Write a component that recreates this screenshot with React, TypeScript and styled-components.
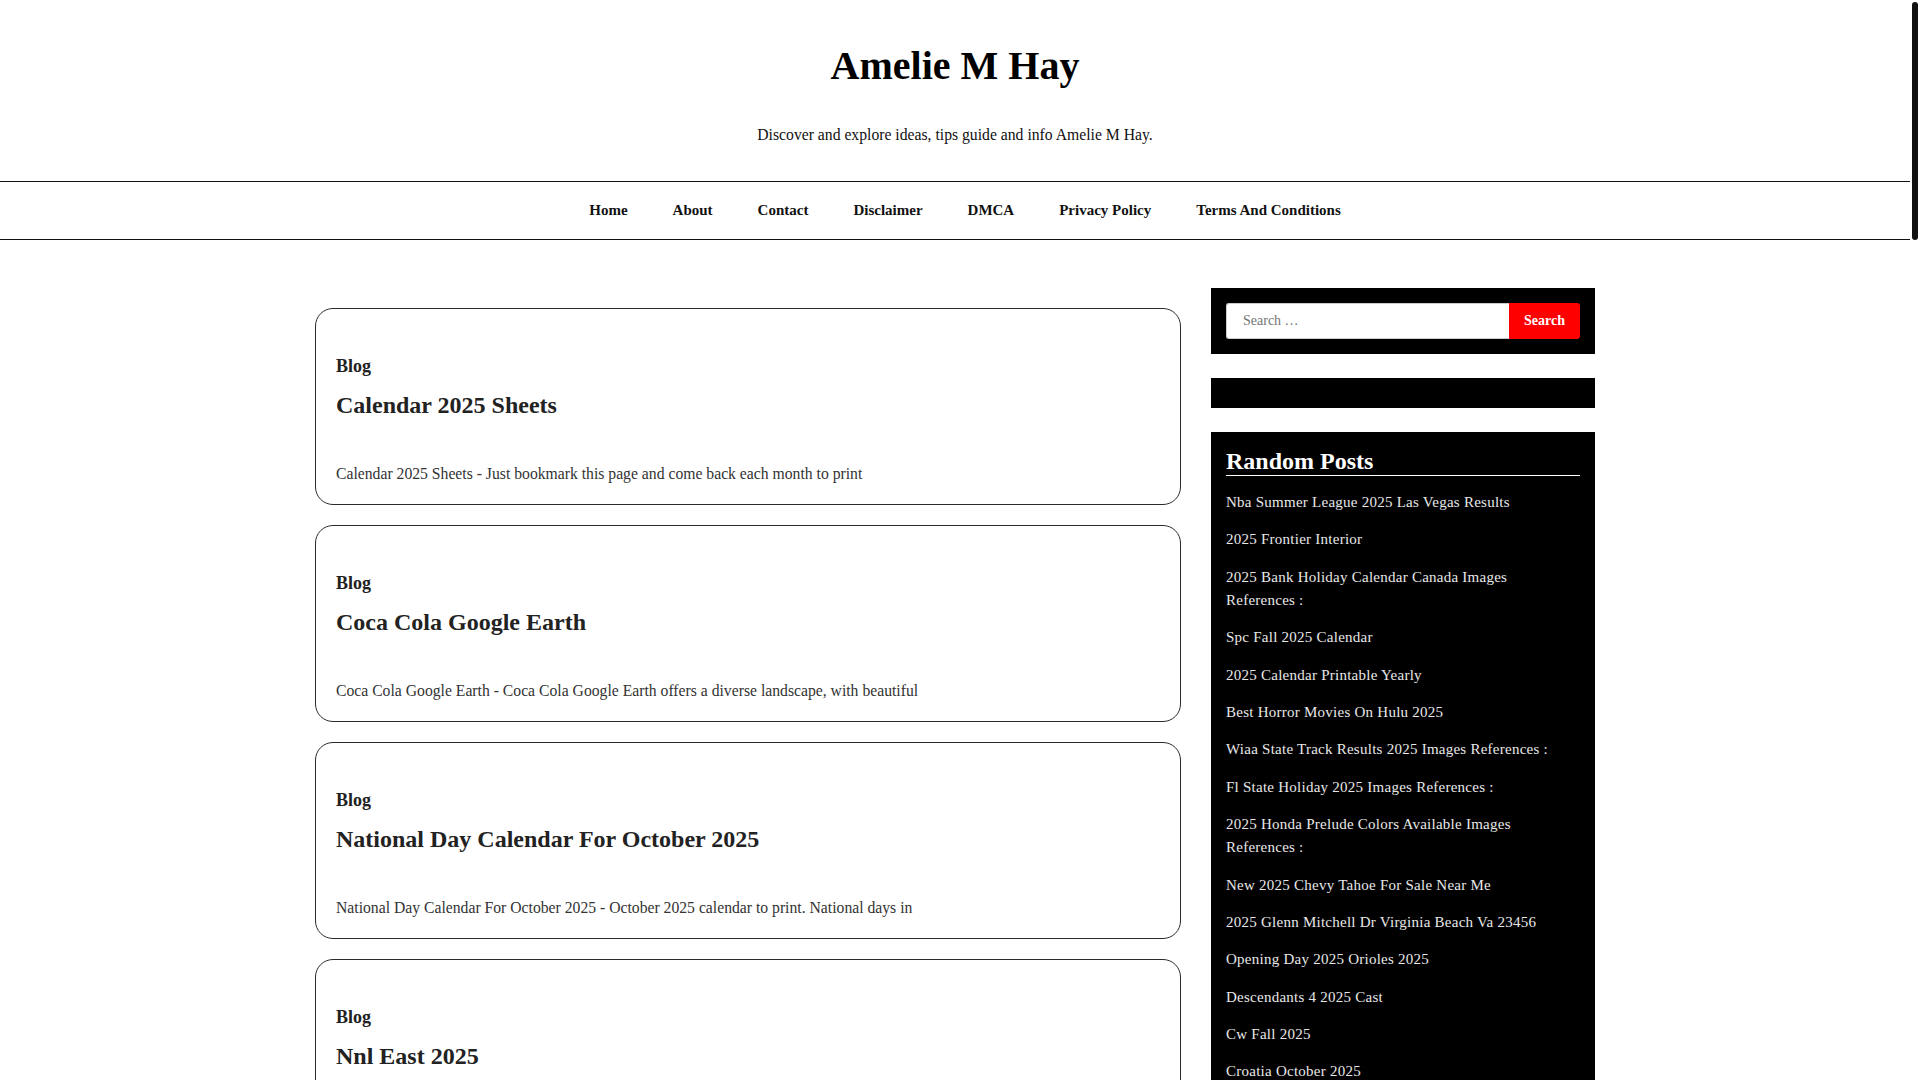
import styled, { createGlobalStyle } from "styled-components";

const GlobalStyle = createGlobalStyle`
  html, body {
    margin: 0;
    padding: 0;
    background: #fff;
  }
  body {
    font-family: "Liberation Serif", "Times New Roman", serif;
    color: #222;
  }
`;

// page width leaves room for the scrollbar strip seen on the right
const Page = styled.div`
  width: calc(100% - 10px);
`;

const ScrollThumb = styled.div`
  position: fixed;
  top: 2px;
  right: 2px;
  width: 6px;
  height: 238px;
  border-radius: 3px;
  background: #111;
`;

const Header = styled.header`
  text-align: center;
  padding: 42px 0 34px;
`;

const SiteTitle = styled.h1`
  margin: 0;
  font-size: 40px;
  line-height: 48px;
  font-weight: 700;
  color: #000;
`;

const Tagline = styled.p`
  margin: 33px 0 0;
  font-size: 15.7px;
  line-height: 24px;
  color: #111;
`;

const Nav = styled.nav`
  border-top: 1px solid #111;
  border-bottom: 1px solid #111;
`;

const NavList = styled.ul`
  list-style: none;
  margin: 0;
  padding: 0 0 0 20px;
  display: flex;
  justify-content: center;
`;

const NavItem = styled.li`
  padding: 0 22.5px;
  font-size: 15px;
  font-weight: 700;
  line-height: 57px;
  color: #111;
`;

const Wrapper = styled.div`
  width: 1280px;
  margin: 48px auto 0;
  display: flex;
  gap: 30px;
  align-items: flex-start;
`;

const Main = styled.main`
  width: 866px;
  flex-shrink: 0;
`;

const Card = styled.article`
  margin-top: 20px;
  border: 1px solid #2a2a2a;
  border-radius: 18px;
  padding: 44px 20px 18px;
`;

const Category = styled.div`
  font-size: 18px;
  line-height: 27px;
  font-weight: 700;
  color: #222;
`;

const PostTitle = styled.h2`
  margin: 10px 0 0;
  font-size: 24px;
  line-height: 31px;
  font-weight: 700;
  color: #222;
`;

const Excerpt = styled.p`
  margin: 41px 0 0;
  font-size: 15.7px;
  line-height: 24px;
  color: #333;
  white-space: nowrap;
  overflow: hidden;
`;

const Sidebar = styled.aside`
  width: 384px;
  display: flex;
  flex-direction: column;
  gap: 24px;
`;

const Widget = styled.section<{ $minHeight?: number }>`
  background: #000;
  padding: 15px;
  min-height: ${(p) => (p.$minHeight ? `${p.$minHeight}px` : "auto")};
  box-sizing: border-box;
`;

const SearchForm = styled.form`
  display: flex;
  height: 36px;
`;

const SearchInput = styled.input`
  flex: 1;
  min-width: 0;
  border: 1px solid #ccc;
  border-right: none;
  border-radius: 3px 0 0 3px;
  padding: 0 16px;
  font-family: inherit;
  font-size: 14px;
  background: #fff;
  outline: none;
  &::placeholder {
    color: #757575;
  }
`;

const SearchButton = styled.button`
  width: 71px;
  border: none;
  border-radius: 0 3px 3px 0;
  background: #ff0000;
  color: #fff;
  font-family: inherit;
  font-size: 14px;
  font-weight: 700;
  cursor: pointer;
`;

const WidgetTitle = styled.h3`
  margin: 0 0 15px;
  font-size: 24px;
  line-height: 28px;
  font-weight: 700;
  color: #fff;
  border-bottom: 1px solid #fff;
`;

const PostList = styled.ul`
  list-style: none;
  margin: 0;
  padding: 0;
`;

const PostLink = styled.li`
  font-size: 15px;
  letter-spacing: 0.25px;
  line-height: 23px;
  color: #e8e8e8;
  margin-bottom: 14.4px;
`;

const Footer = styled.footer`
  margin-top: 60px;
  background: #000;
  color: #ddd;
  text-align: center;
  font-size: 15px;
  padding: 30px 0;
`;

const navItems = [
  "Home",
  "About",
  "Contact",
  "Disclaimer",
  "DMCA",
  "Privacy Policy",
  "Terms And Conditions",
];

const posts = [
  ["Calendar 2025 Sheets", "Calendar 2025 Sheets - Just bookmark this page and come back each month to print"],
  ["Coca Cola Google Earth", "Coca Cola Google Earth - Coca Cola Google Earth offers a diverse landscape, with beautiful"],
  ["National Day Calendar For October 2025", "National Day Calendar For October 2025 - October 2025 calendar to print. National days in"],
  ["Nnl East 2025", "Nnl East 2025 - The Negro National League East returns with a full schedule of games"],
  ["Spc Fall 2025 Calendar", "Spc Fall 2025 Calendar - Find the important dates for the fall semester and plan ahead"],
  ["2025 Frontier Interior", "2025 Frontier Interior - Take a closer look at the cabin, seats and the dashboard of"],
  ["Best Horror Movies On Hulu 2025", "Best Horror Movies On Hulu 2025 - The scariest films you can stream right now on"],
  ["Cw Fall 2025", "Cw Fall 2025 - Here is the complete fall schedule with premiere dates for every show"],
  ["Croatia October 2025", "Croatia October 2025 - Weather, events and travel tips for visiting Croatia in the"],
  ["Descendants 4 2025 Cast", "Descendants 4 2025 Cast - Meet the actors who join the new chapter of the musical"],
  ["Opening Day 2025 Orioles 2025", "Opening Day 2025 Orioles 2025 - Everything you need to know about the first game of the"],
  ["2025 Calendar Printable Yearly", "2025 Calendar Printable Yearly - Free yearly calendar templates that you can print at"],
  ["New 2025 Chevy Tahoe For Sale Near Me", "New 2025 Chevy Tahoe For Sale Near Me - Browse the latest inventory and compare prices"],
  ["Fl State Holiday 2025", "Fl State Holiday 2025 - List of state holidays observed in Florida during the year"],
  ["Wiaa State Track Results 2025", "Wiaa State Track Results 2025 - Complete results from the state track and field meet"],
  ["2025 Bank Holiday Calendar Canada", "2025 Bank Holiday Calendar Canada - All statutory holidays across the provinces and"],
  ["2025 Honda Prelude Colors Available", "2025 Honda Prelude Colors Available - See every paint option offered for the new coupe"],
  ["Nba Summer League 2025 Las Vegas Results", "Nba Summer League 2025 Las Vegas Results - Scores and highlights from every game played"],
  ["2025 Glenn Mitchell Dr Virginia Beach Va 23456", "2025 Glenn Mitchell Dr Virginia Beach Va 23456 - Property details, photos and nearby"],
  ["Printable 2025 Monthly Planner", "Printable 2025 Monthly Planner - Keep track of your goals with these simple monthly"],
];

const randomPosts = [
  "Nba Summer League 2025 Las Vegas Results",
  "2025 Frontier Interior",
  "2025 Bank Holiday Calendar Canada Images References :",
  "Spc Fall 2025 Calendar",
  "2025 Calendar Printable Yearly",
  "Best Horror Movies On Hulu 2025",
  "Wiaa State Track Results 2025 Images References :",
  "Fl State Holiday 2025 Images References :",
  "2025 Honda Prelude Colors Available Images References :",
  "New 2025 Chevy Tahoe For Sale Near Me",
  "2025 Glenn Mitchell Dr Virginia Beach Va 23456",
  "Opening Day 2025 Orioles 2025",
  "Descendants 4 2025 Cast",
  "Cw Fall 2025",
  "Croatia October 2025",
  "Coca Cola Google Earth",
  "Calendar 2025 Sheets",
  "Nnl East 2025",
  "National Day Calendar For October 2025",
  "Printable 2025 Monthly Planner",
];

export default function App() {
  return (
    <Page>
      <GlobalStyle />
      <ScrollThumb />
      <Header>
        <SiteTitle>Amelie M Hay</SiteTitle>
        <Tagline>Discover and explore ideas, tips guide and info Amelie M Hay.</Tagline>
      </Header>
      <Nav>
        <NavList>
          {navItems.map((item) => (
            <NavItem key={item}>{item}</NavItem>
          ))}
        </NavList>
      </Nav>
      <Wrapper>
        <Main>
          {posts.map(([title, excerpt]) => (
            <Card key={title}>
              <Category>Blog</Category>
              <PostTitle>{title}</PostTitle>
              <Excerpt>{excerpt}</Excerpt>
            </Card>
          ))}
        </Main>
        <Sidebar>
          <Widget>
            <SearchForm onSubmit={(e) => e.preventDefault()}>
              <SearchInput type="search" placeholder="Search …" />
              <SearchButton type="submit">Search</SearchButton>
            </SearchForm>
          </Widget>
          <Widget $minHeight={30} />
          <Widget>
            <WidgetTitle>Random Posts</WidgetTitle>
            <PostList>
              {randomPosts.map((p) => (
                <PostLink key={p}>{p}</PostLink>
              ))}
            </PostList>
          </Widget>
        </Sidebar>
      </Wrapper>
      <Footer>Copyright © 2025 Amelie M Hay. All rights reserved.</Footer>
    </Page>
  );
}
